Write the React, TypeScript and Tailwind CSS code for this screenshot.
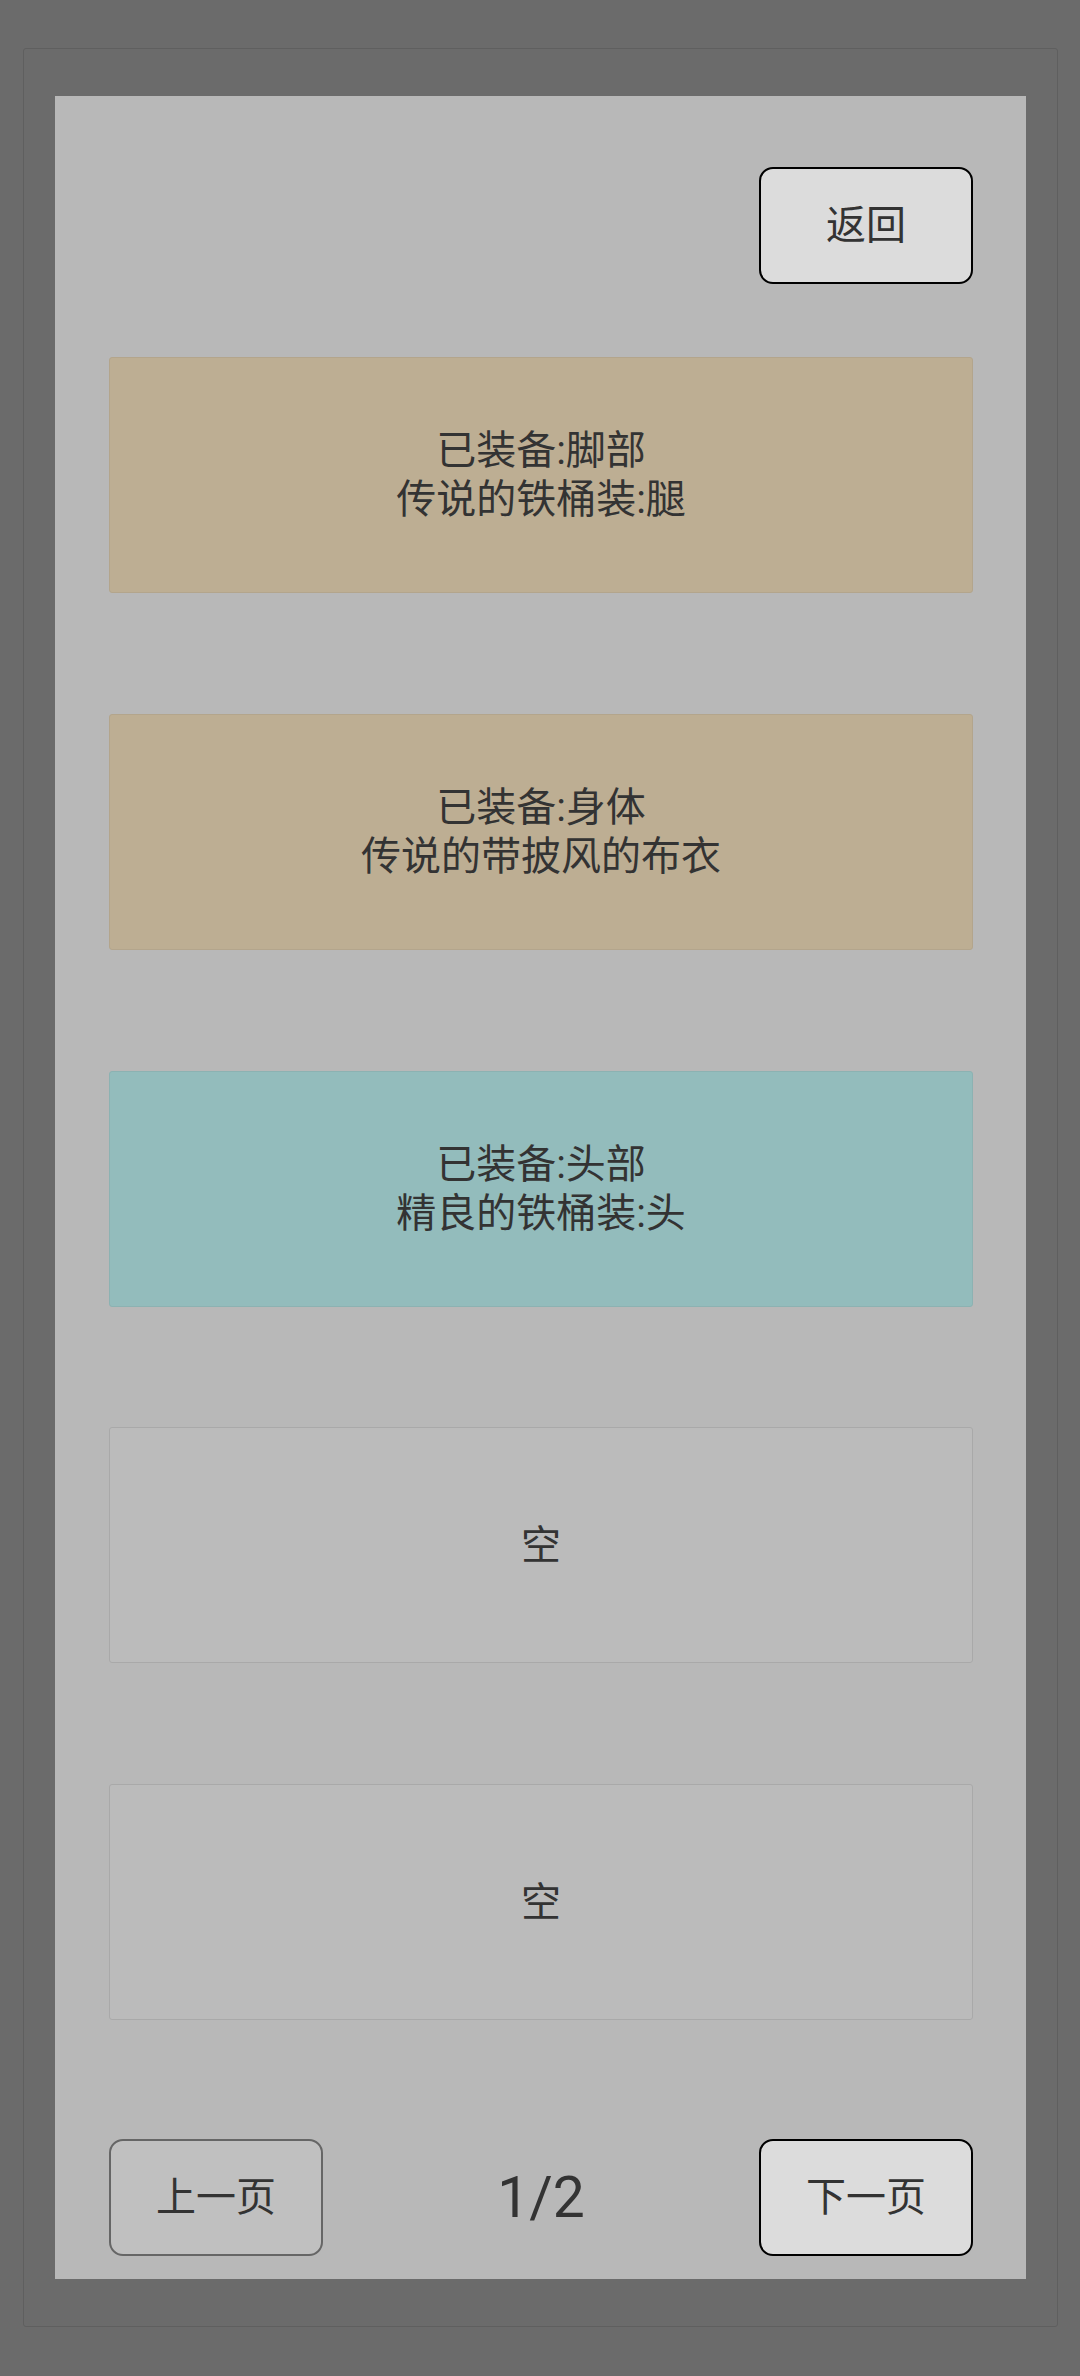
const font = "font-['Roboto','Noto_Sans_CJK_SC',sans-serif]";

type Slot = { label: string; item?: string; tone: "tan" | "teal" | "empty" };

const slots: Slot[] = [
  { label: "已装备:脚部", item: "传说的铁桶装:腿", tone: "tan" },
  { label: "已装备:身体", item: "传说的带披风的布衣", tone: "tan" },
  { label: "已装备:头部", item: "精良的铁桶装:头", tone: "teal" },
  { label: "空", tone: "empty" },
  { label: "空", tone: "empty" },
];

const toneClass = {
  tan: "bg-[#bdae93] border-[#b3a58c]",
  teal: "bg-[#93bcbc] border-[#8cb2b2]",
  empty: "bg-[#bbbbbb] border-[#a9a9a9]",
};

function SlotCard({ slot }: { slot: Slot }) {
  return (
    <div
      className={`h-[236px] w-full rounded-[3px] border flex flex-col items-center justify-center text-[40px] leading-[49px] text-[#333333] ${toneClass[slot.tone]}`}
    >
      <span>{slot.label}</span>
      {slot.item && <span>{slot.item}</span>}
    </div>
  );
}

export default function App() {
  return (
    <div className={`min-h-[2376px] w-[1080px] bg-[#6b6b6b] pt-[48px] pl-[23px] ${font}`}>
      <div className="w-[1035px] h-[2279px] rounded-[3px] border border-[#5f5f5f] pt-[47px] pl-[31px]">
        <div className="w-[971px] h-[2183px] bg-[#b8b8b8] pl-[54px] pr-[53px] pt-[71px] flex flex-col">
          <div className="flex justify-end">
            <button className="w-[214px] h-[117px] rounded-[14px] border-[2.5px] border-black bg-[#dcdcdc] text-[40px] text-[#333333]">
              返回
            </button>
          </div>

          <div className="mt-[73px] flex flex-col gap-[120.75px]">
            {slots.map((s, i) => (
              <SlotCard key={i} slot={s} />
            ))}
          </div>

          <div className="mt-[119px] flex items-center justify-between">
            <button className="w-[214px] h-[117px] rounded-[14px] border-2 border-[#666666] bg-[#c0c0c0] text-[40px] text-[#333333]">
              上一页
            </button>
            <span className="text-[57px] leading-none text-[#333333]">1/2</span>
            <button className="w-[214px] h-[117px] rounded-[14px] border-[2.5px] border-black bg-[#dcdcdc] text-[40px] text-[#333333]">
              下一页
            </button>
          </div>
        </div>
      </div>
    </div>
  );
}
